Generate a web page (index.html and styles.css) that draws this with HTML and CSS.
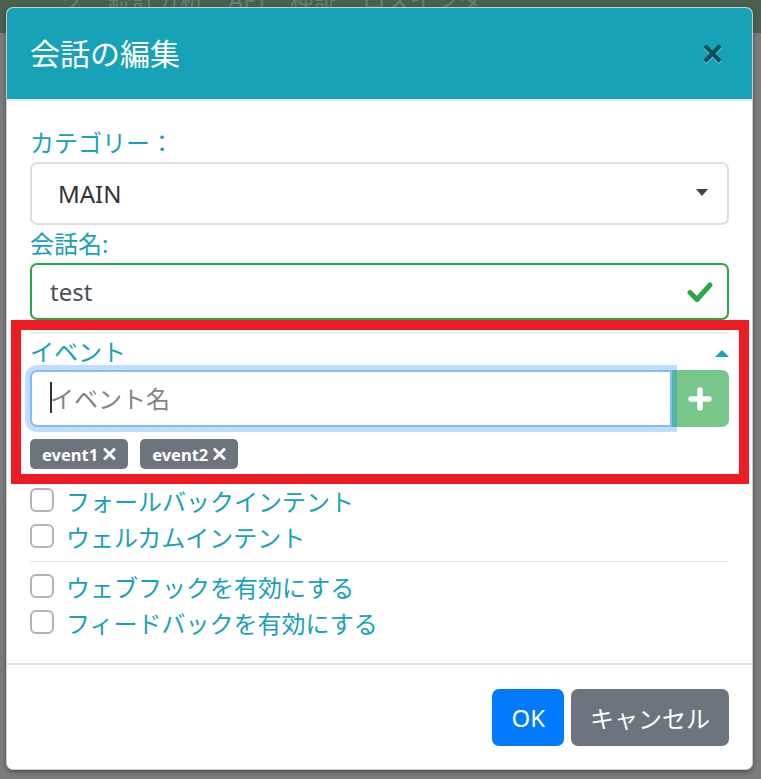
FILE: index.html
```html
<!DOCTYPE html>
<html lang="ja">
<head>
  <meta charset="UTF-8">
  <meta name="viewport" content="width=device-width, initial-scale=1.0">
  <title>会話の編集</title>
  <link rel="stylesheet" href="styles.css">
</head>
<body>
  <div class="page">
    <div class="page-nav">ク　統計分析　API　検証　ロスインタ</div>
  </div>

  <div class="modal">
    <div class="modal-header">
      <h5 class="modal-title">会話の編集</h5>
      <button class="close" type="button">&times;</button>
    </div>

    <div class="modal-body">
      <label class="field-label">カテゴリー：</label>
      <div class="select-wrap">
        <select class="form-control custom-select">
          <option>MAIN</option>
        </select>
      </div>

      <label class="field-label">会話名:</label>
      <div class="valid-wrap">
        <input class="form-control is-valid" type="text" value="test">
        <svg class="valid-icon" width="26" height="22" viewBox="0 0 26 22">
          <path d="M3 11.5 L10 18.5 L23 4" fill="none" stroke="#28a745" stroke-width="5" stroke-linecap="round" stroke-linejoin="round"/>
        </svg>
      </div>

      <div class="event-field">
        <div class="event-inner">
          <div class="event-head">
            <span class="field-label">イベント</span>
            <span class="caret-up"></span>
          </div>
          <div class="input-group">
            <div class="event-input-wrap">
              <input class="form-control is-focused" type="text" placeholder="イベント名">
              <span class="text-cursor"></span>
            </div>
            <button class="btn-add" type="button">
              <svg width="24" height="24" viewBox="0 0 24 24">
                <path d="M12 3 V21 M3 12 H21" stroke="#fff" stroke-width="5.5" stroke-linecap="round"/>
              </svg>
            </button>
          </div>
          <div class="tags">
            <span class="badge">event1
              <svg width="13" height="12" viewBox="0 0 13 12"><path d="M2 1.5 L11 10.5 M11 1.5 L2 10.5" stroke="#fff" stroke-width="3" stroke-linecap="round"/></svg>
            </span>
            <span class="badge">event2
              <svg width="13" height="12" viewBox="0 0 13 12"><path d="M2 1.5 L11 10.5 M11 1.5 L2 10.5" stroke="#fff" stroke-width="3" stroke-linecap="round"/></svg>
            </span>
          </div>
        </div>
        <div class="highlight"></div>
      </div>

      <div class="checks">
        <label class="check"><span class="check-box"></span>フォールバックインテント</label>
        <label class="check"><span class="check-box"></span>ウェルカムインテント</label>
      </div>
      <hr class="divider">
      <div class="checks">
        <label class="check"><span class="check-box"></span>ウェブフックを有効にする</label>
        <label class="check"><span class="check-box"></span>フィードバックを有効にする</label>
      </div>
    </div>

    <div class="modal-footer">
      <button class="btn btn-primary" type="button">OK</button>
      <button class="btn btn-secondary" type="button">キャンセル</button>
    </div>
  </div>
</body>
</html>
```

FILE: styles.css
```css
* {
  box-sizing: border-box;
}

body {
  margin: 0;
  min-height: 779px;
  font-family: "Noto Sans", "Noto Sans CJK JP", sans-serif;
  background-color: #7a7b7a;
  position: relative;
  overflow: hidden;
}

/* dimmed page behind the dialog */
.page-nav {
  height: 45px;
  background-color: #4b5f51;
  color: #6a7d6e;
  font-size: 24px;
  line-height: 24px;
  padding-left: 60px;
  margin-top: -12px;
  white-space: nowrap;
}

.modal {
  position: absolute;
  top: 7px;
  left: 6px;
  width: 747px;
  background-color: #fff;
  border: 1px solid rgba(0, 0, 0, 0.2);
  border-radius: 7px;
  box-shadow: 0 2px 4px rgba(0, 0, 0, 0.35);
  overflow: hidden;
}

.modal-header {
  display: flex;
  justify-content: space-between;
  align-items: center;
  background-color: #17a2b8;
  padding: 23px;
  border-bottom: 2px solid #e3e6e8;
}

.modal-title {
  margin: 0;
  font-size: 30px;
  font-weight: 400;
  line-height: 45px;
  color: #fff;
}

.close {
  background: none;
  border: none;
  padding: 0 6px 0 0;
  font-family: "Liberation Sans", sans-serif;
  font-size: 36px;
  font-weight: 700;
  line-height: 45px;
  color: #0d4f5a;
  text-shadow: 0 1px 0 rgba(255, 255, 255, 0.5);
  cursor: pointer;
}

.modal-body {
  padding: 23px;
}

.field-label {
  display: block;
  margin: 0;
  font-size: 24px;
  line-height: 38px;
  color: #17a2b8;
}

.form-control {
  display: block;
  width: 100%;
  height: 57px;
  padding: 0 18px;
  font-family: "Noto Sans", "Noto Sans CJK JP", sans-serif;
  font-size: 24px;
  color: #495057;
  background-color: #fff;
  border: 2px solid #ced4da;
  border-radius: 7px;
  outline: none;
}

.select-wrap {
  position: relative;
}

.select-wrap::after {
  content: "";
  position: absolute;
  right: 21px;
  top: 27px;
  border-left: 6.5px solid transparent;
  border-right: 6.5px solid transparent;
  border-top: 7px solid #444;
}

.custom-select {
  height: 63px;
  padding-left: 26px;
  color: #333;
  border-color: #dedede;
  -webkit-appearance: none;
  appearance: none;
}

.valid-wrap {
  position: relative;
}

.is-valid {
  border-color: #28a745;
  padding-right: 60px;
}

.valid-icon {
  position: absolute;
  right: 16px;
  top: 18px;
}

/* event section */
.event-field {
  position: relative;
  padding: 12px 0 13px;
}

.event-inner {
  border-top: 2px solid #e9ecef;
}

.event-head {
  display: flex;
  justify-content: space-between;
  align-items: center;
  height: 36px;
}

.event-head .field-label {
  line-height: 36px;
}

.caret-up {
  width: 0;
  height: 0;
  border-left: 7.5px solid transparent;
  border-right: 7.5px solid transparent;
  border-bottom: 7px solid #17a2b8;
  margin-top: 2px;
}

.input-group {
  display: flex;
}

.event-input-wrap {
  position: relative;
  flex: 1;
}

.is-focused {
  border-color: #80bdff;
  border-radius: 7px 0 0 7px;
  box-shadow: 0 0 0 5px rgba(0, 123, 255, 0.25);
}

.is-focused::placeholder {
  color: #7d858c;
}

.text-cursor {
  position: absolute;
  left: 20px;
  top: 12px;
  width: 1.5px;
  height: 31px;
  background-color: #333;
}

.btn-add {
  width: 58px;
  height: 57px;
  margin-left: -1px;
  display: flex;
  align-items: center;
  justify-content: center;
  background-color: #77c68a;
  border: none;
  border-radius: 0 7px 7px 0;
  padding: 0;
}

.tags {
  display: flex;
  gap: 12px;
  margin-top: 12px;
}

.badge {
  display: inline-flex;
  align-items: center;
  gap: 5px;
  height: 30px;
  padding: 0 12px 0 12px;
  background-color: #6c757d;
  color: #fff;
  font-size: 16.5px;
  font-weight: 700;
  border-radius: 5px;
}

.highlight {
  position: absolute;
  top: 0;
  bottom: -2px;
  left: -19px;
  right: -20px;
  border: 10px solid #ed1c24;
  pointer-events: none;
}

/* checkboxes */
.check {
  display: flex;
  align-items: center;
  height: 36px;
  font-size: 24px;
  color: #17a2b8;
}

.check-box {
  width: 24px;
  height: 24px;
  border: 2px solid #adb5bd;
  border-radius: 6px;
  margin-right: 12px;
  background-color: #fff;
}

.divider {
  margin: 7px 0 6px;
  border: none;
  border-top: 1.5px solid #e2e2e2;
}

.modal-footer {
  display: flex;
  justify-content: flex-end;
  gap: 7px;
  padding: 24px 23px 23px;
  border-top: 2px solid #dee2e6;
}

.btn {
  height: 57px;
  padding: 0 19px;
  font-family: "Noto Sans", "Noto Sans CJK JP", sans-serif;
  font-size: 24px;
  color: #fff;
  border: none;
  border-radius: 7px;
  cursor: pointer;
}

.btn-primary {
  background-color: #007bff;
}

.btn-secondary {
  background-color: #6c757d;
}
```
